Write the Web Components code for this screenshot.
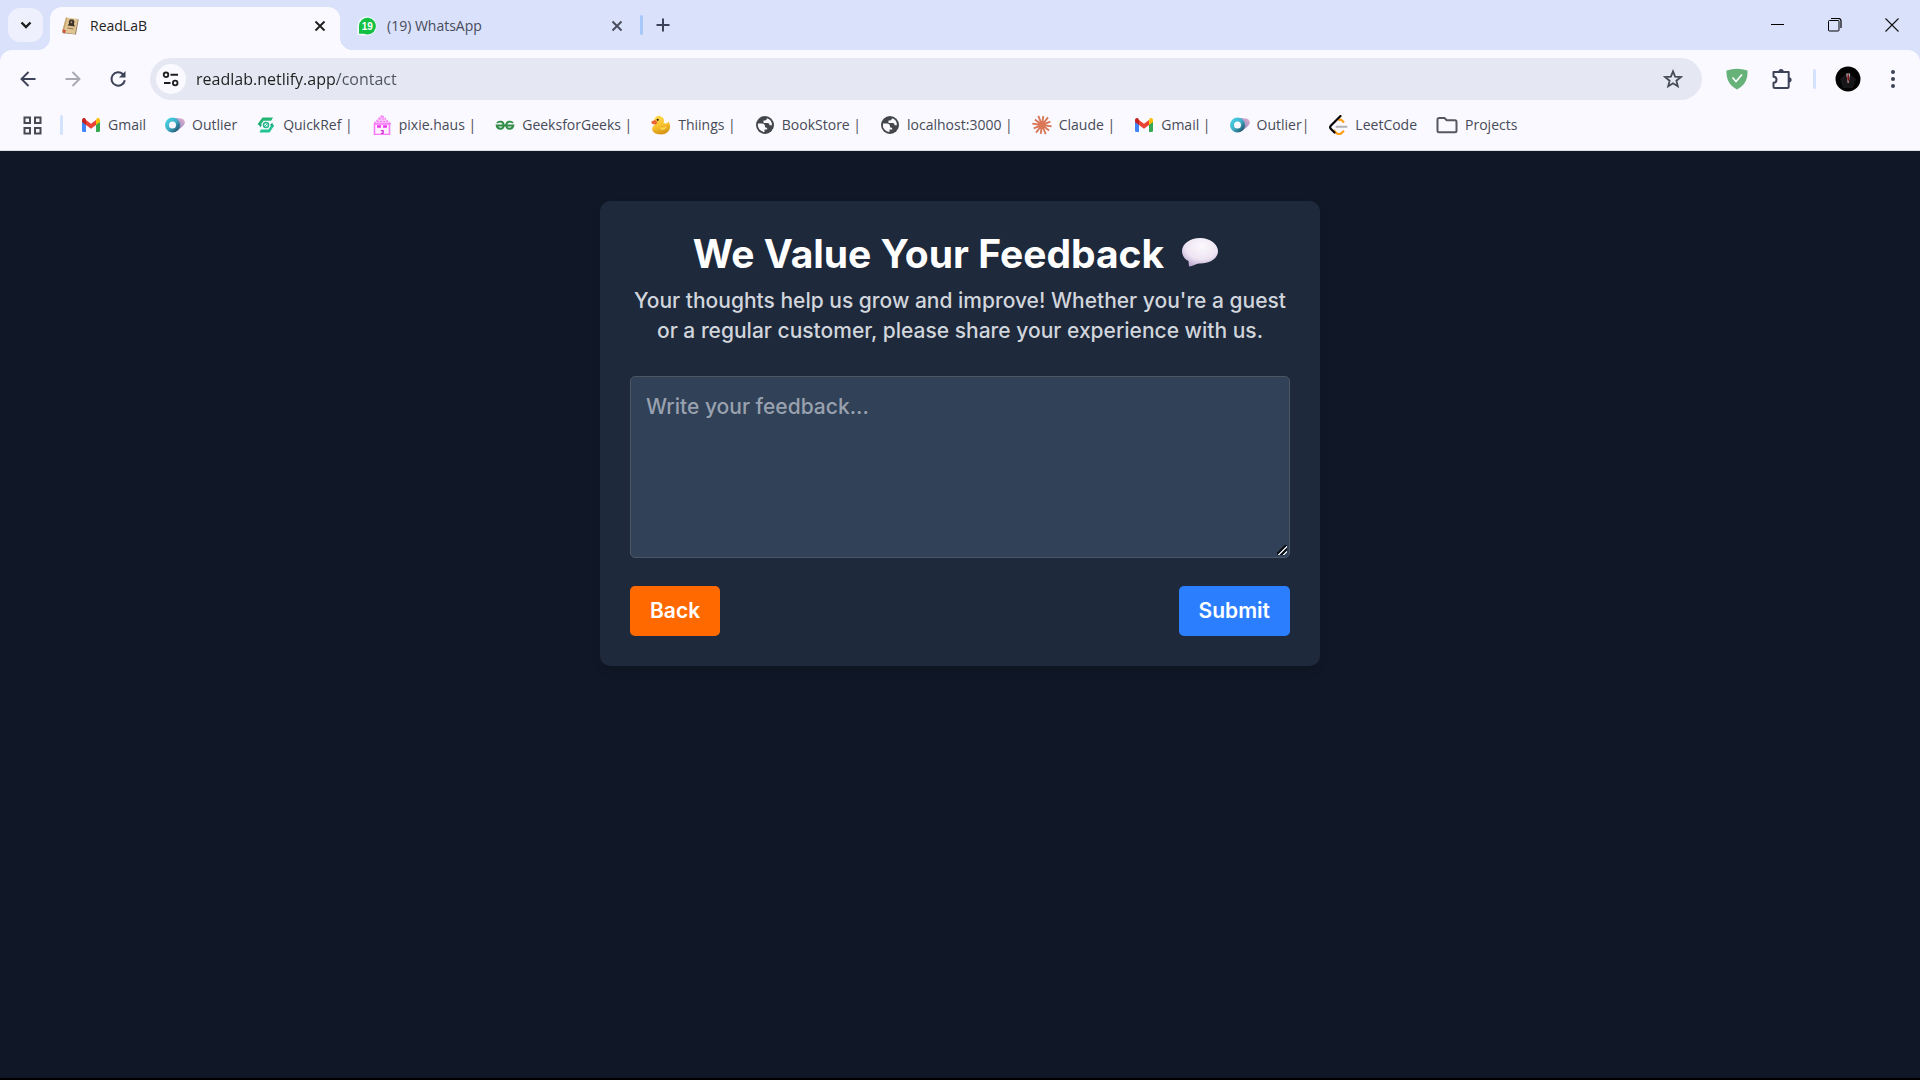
<!DOCTYPE html>
<html lang="en">
<head>
<meta charset="utf-8">
<title>ReadLaB</title>
<style>
  html, body { margin: 0; height: 100%; }
  body { font-family: "Open Sans", "Noto Sans", sans-serif; background: #101726; }
</style>
</head>
<body>
<browser-window>
  <tab-strip slot="tabs">
    <browser-tab icon="book" active>ReadLaB</browser-tab>
    <browser-tab icon="whatsapp">(19) WhatsApp</browser-tab>
  </tab-strip>
  <nav-bar slot="nav" url="readlab.netlify.app/contact"></nav-bar>
  <bookmark-bar slot="bookmarks">
    <bookmark-item icon="gmail" href="#gmail">Gmail</bookmark-item>
    <bookmark-item icon="outlier" href="#outlier">Outlier</bookmark-item>
    <bookmark-item icon="quickref" href="#quickref">QuickRef |</bookmark-item>
    <bookmark-item icon="house" href="#pixie">pixie.haus |</bookmark-item>
    <bookmark-item icon="geeks" href="#geeks">GeeksforGeeks |</bookmark-item>
    <bookmark-item icon="duck" href="#thiings">Thiings |</bookmark-item>
    <bookmark-item icon="globe" href="#bookstore">BookStore |</bookmark-item>
    <bookmark-item icon="globe" href="#localhost">localhost:3000 |</bookmark-item>
    <bookmark-item icon="claude" href="#claude">Claude |</bookmark-item>
    <bookmark-item icon="gmail" href="#gmail2">Gmail |</bookmark-item>
    <bookmark-item icon="outlier" href="#outlier2">Outlier|</bookmark-item>
    <bookmark-item icon="leetcode" href="#leetcode">LeetCode</bookmark-item>
    <bookmark-item icon="folder" href="#projects">Projects</bookmark-item>
  </bookmark-bar>
  <feedback-card>
    <span slot="title">We Value Your Feedback</span>
    Your thoughts help us grow and improve! Whether you're a guest or a regular customer, please share your experience with us.
  </feedback-card>
</browser-window>

<script>
const svg = (w, h, body) => `<svg width="${w}" height="${h}" viewBox="0 0 ${w} ${h}" fill="none" aria-hidden="true">${body}</svg>`;

const rays = Array.from({ length: 12 }, (_, i) => {
  const a = (i * 30 + 8) * Math.PI / 180, r = i % 2 ? 9 : 9.8;
  return `M10 10L${(10 + r * Math.cos(a)).toFixed(1)} ${(10 + r * Math.sin(a)).toFixed(1)}`;
}).join('');

const ICONS = {
  chevron: svg(12, 12, '<path d="M1.5 3.5L6 8l4.500-4.500" stroke="#1f1f1f" stroke-width="2.400"/>'),
  close: svg(12, 12, '<path d="M1.500 1.500l9 9M10.500 1.500l-9 9" stroke="currentColor" stroke-width="1.900"/>'),
  plus: svg(14, 14, '<path d="M7 .5v13M.5 7h13" stroke="#3c4257" stroke-width="2"/>'),
  min: svg(14, 14, '<path d="M0 6.500h13" stroke="#000"/>'),
  max: svg(14, 14, '<rect x=".5" y="2.500" width="10.500" height="10.500" rx="1" stroke="#000"/><path d="M3 .5h7.500a2.500 2.500 0 0 1 2.500 2.500V10" stroke="#000" stroke-width="1.200"/>'),
  winclose: svg(14, 14, '<path d="M.5 .5l13 13M13.500 .5l-13 13" stroke="#111" stroke-width="1.100"/>'),
  back: svg(16, 16, '<path d="M15.500 8H2M8.500 1L1.500 8l7 7" stroke="#3c4257" stroke-width="1.900"/>'),
  forward: svg(16, 16, '<path d="M.5 8H14M7.500 1l7 7-7 7" stroke="#a9a9b2" stroke-width="1.900"/>'),
  reload: svg(18, 18, '<path d="M15.800 10.200A6.700 6.700 0 1 1 14 4.300l1.500 1.500" stroke="#3c4257" stroke-width="2"/><path d="M16.500 1v6.500H10z" fill="#3c4257"/>'),
  tune: svg(18, 16, '<circle cx="4" cy="3.800" r="2.300" stroke="#1f1f1f" stroke-width="1.800"/><path d="M8.500 3.800H16M2 12h6.500" stroke="#1f1f1f" stroke-width="2"/><circle cx="13.200" cy="12" r="2.300" stroke="#1f1f1f" stroke-width="1.800"/>'),
  star: svg(20, 20, '<path d="M10 2.400l2.100 5.300 5.700.4-4.400 3.600 1.400 5.600L10 14.200l-4.800 3.100 1.400-5.600-4.400-3.600 5.700-.4z" stroke="#474b57" stroke-width="1.800"/>'),
  shield: svg(22, 22, '<path d="M.5 2.500Q11-1 21.500 2.500C22 12 18 18 11 21.500 4 18 0 12 .5 2.500z" fill="#67b279"/><path d="M6.500 9.500l3.500 4 6-7" stroke="#fff" stroke-width="1.700"/>'),
  puzzle: svg(22, 22, '<path d="M2.500 4h15.200v14.500a1.500 1.500 0 0 1-1.500 1.500H4a1.500 1.500 0 0 1-1.500-1.500v-3.700a3 3 0 0 0 0-6z" stroke="#3c4257" stroke-width="2" stroke-linejoin="round"/><path d="M7.500 3.500a2.600 2.600 0 0 1 5.200 0zM18 9.200a2.600 2.600 0 0 1 0 5.200z" fill="#3c4257"/>'),
  avatar: svg(26, 26, '<circle cx="13" cy="13" r="12.500" fill="#030303"/><path d="M11 8l-6 5 3 9h10l3-9-6-5z" fill="#171719"/><path d="M11.200 7.500h4l-1.500 9.500h-1z" fill="#b9b4b4"/><path d="M12.700 8h1l.6 4.500-1.100 4-1-4z" fill="#7f1218"/>'),
  dots: svg(6, 20, '<circle cx="3" cy="3" r="2" fill="#3c4257"/><circle cx="3" cy="10" r="2" fill="#3c4257"/><circle cx="3" cy="17" r="2" fill="#3c4257"/>'),
  apps: svg(19, 19, '<path d="M1.500 1.500h5.500v5.500H1.500zM12 1.500h5.500v5.500H12zM1.500 12h5.500v5.500H1.500zM12 12h5.500v5.500H12z" stroke="#474a50" stroke-width="2"/>'),
  book: svg(20, 20, '<path d="M6 1.500l12 1.500-2.800 15L2 16z" fill="#e0c592"/><path d="M6 1.500L2 16l1.500.3L7.300 1.700z" fill="#c3a26c"/><path d="M2 16l13 2L18 3l.6.600-2.700 14.900L3 17z" fill="#8b6d45"/><path d="M8.700 5.500l1.300-2h3.200l1.300 2-.6 2.500 1 2.500-7.400-1L9 7.800z" fill="#3b332a"/><path d="M10.700 5.300l1.600.2-.3 1.700-1.500-.2z" fill="#b89c70"/><path d="M7.500 12l6 .9" stroke="#8a7350"/><path d="M2.500 13.500l3.500.7-2 4z" fill="#cf4a38"/>'),
  whatsapp: svg(20, 20, '<path d="M.5 19V10A9.500 9.500 0 1 1 10 19.500z" fill="#f7fbff"/><path d="M2 17.800V10a8.400 8.400 0 1 1 5 7.800z" fill="#12c143"/><text x="10.300" y="13.700" text-anchor="middle" font-family="Liberation Sans, sans-serif" font-weight="700" font-size="10" fill="#fff">19</text>'),
  gmail: svg(20, 20, '<path d="M1 6v9.500A1.500 1.500 0 0 0 2.500 17H5V8z" fill="#4285f4"/><path d="M15 8v9h2.500a1.500 1.500 0 0 0 1.500-1.500V6z" fill="#34a853"/><path d="M15 5.500V10l4-3V5.200c0-2-2-2.700-3.300-1.700z" fill="#fbbc04"/><path d="M5 10V5l5 3.800L15 5v5l-5 3.800z" fill="#ea4335"/><path d="M1 5.200V7l4 3V5l-.7-1.500C3 2.500 1 3.200 1 5.200z" fill="#c5221f"/>'),
  outlier: svg(20, 20, '<defs><linearGradient id="a" x1="0" y1="0" x2="1" y2="1"><stop stop-color="#48cfe4"/><stop offset=".5" stop-color="#3fb0c8"/><stop offset="1" stop-color="#22566f"/></linearGradient><linearGradient id="b" x1="0" y1="1" x2="1" y2="0"><stop stop-color="#4b6fae"/><stop offset=".6" stop-color="#b49bc9"/><stop offset="1" stop-color="#e7b3c9"/></linearGradient></defs><path d="M8 4c3-2 6 0 7-.5 3-.7 6 2.500 4.500 5.500-1 2.500-5 4.500-7.500 7z" fill="url(#b)"/><circle cx="7.500" cy="10" r="5.500" stroke="url(#a)" stroke-width="4" fill="#faf9ff"/>'),
  quickref: svg(20, 20, '<path d="M6.500 2.500h10.500l-1.800 3.200H7.500L4 11 1.500 9.300z" fill="#22b573"/><path d="M13.500 17.500H3.500l1.300-3h7.700L16 9l2.300 1.500z" fill="#22c493"/><path d="M3.500 8.500L6 10l-2 2.500zM16.500 11.500L14 10l2.500-2.500z" fill="#16a07b"/><circle cx="10" cy="10" r="2.500" stroke="#22b98a" stroke-width="1.500"/><path d="M8 12l4-4" stroke="#22b98a"/>'),
  house: svg(20, 20, '<path d="M10 .5L2 8.500h16z" fill="#fbc6fb" stroke="#f38df5" stroke-width="1.500" stroke-dasharray="2 1"/><path d="M10 1v2M7 4h6M5 6.500h10" stroke="#f27df4" stroke-dasharray="2 1"/><rect x="2.500" y="9" width="15" height="10.500" fill="#fff0ff" stroke="#fa7bf9" stroke-width="1.600"/><path d="M5 11.500h4M11 11.500h4" stroke="#e93be9" stroke-width="2.500"/><path d="M8.800 15.500h2.400v3H9M9.500 17h2" stroke="#d236d6" stroke-width="1.200"/>'),
  geeks: svg(20, 20, '<path d="M2 8C4 5.700 8.700 6.200 8.700 10.200 8.700 14.800 2.500 14.800 1.700 10.500H18.300C17.500 14.800 11.300 14.800 11.300 10.200 11.300 6.200 16 5.700 18 8" stroke="#2f8d46" stroke-width="1.900"/>'),
  duck: svg(20, 20, '<defs><linearGradient id="d" x1="0" y1="0" x2=".3" y2="1"><stop stop-color="#ffdc50"/><stop offset=".6" stop-color="#f9c22e"/><stop offset="1" stop-color="#d89818"/></linearGradient></defs><path d="M3 6a5 5 0 1 1 9.500 2c2.500 1 4 .5 5-1.500 3 3.500 2.300 13-7.500 13C3 19.500.5 16 1.300 13 2 10.500 3.500 10 4.500 9.200z" fill="url(#d)"/><path d="M4 5L.3 6.500 1 9l4 .5 1.500-2.300z" fill="#ef6130"/><circle cx="6.700" cy="4.800" r="1.100" fill="#2a1a0c"/><path d="M9 12c3 .5 6-.5 7.500-2-.3 4-4 6.500-7 4.500" fill="#ffd64c" stroke="#dd9d1e" stroke-width=".6"/>'),
  globe: svg(20, 20, '<circle cx="10" cy="10" r="9" fill="#44474a"/><path d="M3 8.500h4c1.600 0 3 1 3 2.700v1.100c1.500 0 2.300.7 2.300 2.200H9.500V17A7 7 0 0 1 3 8.500zM12 3.300c-.3 1.700-1 2.200-3.500 2.300v2.300h4c1.500 0 2 .9 2 2.300h2.400A7 7 0 0 0 12 3.300z" fill="#faf9ff"/>'),
  claude: svg(20, 20, `<path d="${rays}" stroke="#d97757" stroke-width="1.900"/><circle cx="10" cy="10" r="3" fill="#d97757"/>`),
  leetcode: svg(20, 20, '<path d="M16 7.500l-2-2c-1-1-2.500-1-3.600 0M5.500 15l2.700 2.900c1.800 1.600 4 1.500 5.500 0L16 15.800" stroke="#ffa116" stroke-width="2.200"/><path d="M12.500 1L3 10.500c-1 1-1 2.500 0 3.500l3.500 3.500" stroke="#070706" stroke-width="2.200" stroke-linecap="round"/><path d="M8.500 11.700h10" stroke="#b3b3b3" stroke-width="2" stroke-linecap="round"/>'),
  folder: svg(22, 20, '<path d="M1.500 4.500a1.500 1.500 0 0 1 1.500-1.500h5.500l2.200 2.300H19a1.500 1.500 0 0 1 1.500 1.500v9a1.500 1.500 0 0 1-1.500 1.500H3a1.500 1.500 0 0 1-1.500-1.500z" stroke="#55585e" stroke-width="2"/>'),
  bubble: svg(38, 33, '<defs><radialGradient id="s" cx=".55" cy=".3" r=".75"><stop stop-color="#fbf9fd"/><stop offset=".6" stop-color="#eee5f3"/><stop offset="1" stop-color="#b7a5d0"/></radialGradient></defs><path d="M19 1C30 1 37 8 37 14 37 22 28 27 18 26.500 15 27 12 29 8 29.500L7.500 24C3 22 1 18 1 14 1 7 9 1 19 1z" fill="url(#s)"/>')
};

/* Registers an element whose shadow root is cloned from a template. */
function define(name, css, markup, setup) {
  const tpl = document.createElement('template');
  tpl.innerHTML = `<style>*{box-sizing:border-box}button{font:inherit;border:0;padding:0;margin:0;background:none;cursor:pointer}${css}</style>${markup}`;
  customElements.define(name, class extends HTMLElement {
    constructor() {
      super();
      this.attachShadow({ mode: 'open' }).append(tpl.content.cloneNode(true));
    }
    connectedCallback() { if (setup) setup(this, this.shadowRoot); }
  });
}

define('ui-icon', ':host{display:inline-flex;flex:none}svg{display:block}', '', (el, root) => {
  if (!root.querySelector('svg')) root.innerHTML += ICONS[el.getAttribute('name')] || '';
});

define('browser-window', `
  :host{display:flex;flex-direction:column;min-height:100vh;box-sizing:border-box;border-bottom:2px solid #000}
  header{background:#dae1fa}
  .bars{background:#faf9ff;border-radius:12px 12px 0 0;border-bottom:1px solid #dfe0e6}
  main{flex:1;padding:50px 24px;background:#101726}`,
  `<header><slot name="tabs"></slot><div class="bars"><slot name="nav"></slot><slot name="bookmarks"></slot></div></header>
   <main><slot></slot></main>`);

define('tab-strip', `
  :host{display:flex;height:50px;padding-left:8px}
  .search{align-self:center;width:35px;height:34px;border-radius:12px;background:#eef1fd;display:grid;place-items:center;margin-right:7px}
  .tabs{display:flex;gap:7px;align-items:flex-end}
  .sep{align-self:center;width:3px;height:20px;border-radius:2px;background:#a8c7fa;margin:0 3px}
  .new{width:34px;display:grid;place-items:center}
  .win{margin-left:auto;display:flex}
  .win button{width:57px;display:grid;place-items:center}`,
  `<button class="search" aria-label="Search tabs"><ui-icon name="chevron"></ui-icon></button>
   <div class="tabs"><slot></slot></div><span class="sep"></span>
   <button class="new" aria-label="New tab"><ui-icon name="plus"></ui-icon></button>
   <div class="win"><button aria-label="Minimize"><ui-icon name="min"></ui-icon></button><button aria-label="Restore"><ui-icon name="max"></ui-icon></button><button aria-label="Close"><ui-icon name="winclose"></ui-icon></button></div>`);

define('browser-tab', `
  :host{display:flex;position:relative;align-items:center;gap:10px;width:290px;height:43px;padding:0 14px 6px 10px;box-sizing:border-box;font-size:14px;line-height:20px;color:#474b5a}
  :host([active]){background:#faf9ff;border-radius:12px 12px 0 0;color:#1f1f1f}
  :host([active])::before,:host([active])::after{content:"";position:absolute;bottom:0;width:12px;height:12px}
  :host([active])::before{right:100%;background:radial-gradient(circle at 0 0,transparent 12px,#faf9ff 12px)}
  :host([active])::after{left:100%;background:radial-gradient(circle at 100% 0,transparent 12px,#faf9ff 12px)}
  .name{flex:1}
  .x{width:12px;height:20px;display:grid;place-items:center;color:inherit}`,
  `<ui-icon></ui-icon><span class="name"><slot></slot></span><button class="x" aria-label="Close tab"><ui-icon name="close"></ui-icon></button>`,
  (el, root) => {
    const icon = document.createElement('ui-icon');
    icon.setAttribute('name', el.getAttribute('icon'));
    root.querySelector('ui-icon').replaceWith(icon);
  });

define('nav-bar', `
  :host{display:flex;align-items:center;gap:10px;padding:8px 10px 0}
  button{width:35px;height:35px;display:grid;place-items:center}
  .omni{flex:1;display:flex;align-items:center;height:42px;margin:0 7px 0 5px;padding:0 12px 0 6px;border-radius:21px;background:#e5e8f3}
  .omni .site{width:30px;height:30px;border-radius:50%;background:#faf9ff}
  input{flex:1;min-width:0;border:0;outline:0;padding:0 10px;font:16px/24px "Open Sans","Noto Sans",sans-serif;color:#1f1f1f;
    background:linear-gradient(90deg,#1f1f1f 151px,#4d515c 151px);-webkit-background-clip:text;background-clip:text;-webkit-text-fill-color:transparent}
  .sep{width:3px;height:20px;border-radius:2px;background:#d3e3fd;margin:0 4px}`,
  `<button aria-label="Back"><ui-icon name="back"></ui-icon></button>
   <button aria-label="Forward"><ui-icon name="forward"></ui-icon></button>
   <button aria-label="Reload"><ui-icon name="reload"></ui-icon></button>
   <div class="omni"><button class="site" aria-label="Site information"><ui-icon name="tune"></ui-icon></button>
   <input type="text" aria-label="Address" spellcheck="false"><button aria-label="Bookmark this page"><ui-icon name="star"></ui-icon></button></div>
   <button aria-label="Ad blocker"><ui-icon name="shield"></ui-icon></button>
   <button aria-label="Extensions"><ui-icon name="puzzle"></ui-icon></button><span class="sep"></span>
   <button aria-label="Profile"><ui-icon name="avatar"></ui-icon></button>
   <button aria-label="Menu"><ui-icon name="dots"></ui-icon></button>`,
  (el, root) => { root.querySelector('input').value = el.getAttribute('url'); });

define('bookmark-bar', `
  :host{display:flex;align-items:center;height:50px;padding-left:23px}
  button{display:grid}
  .sep{width:3px;height:20px;border-radius:2px;background:#d3e3fd;margin:0 18px}
  nav{display:flex;gap:19px}`,
  `<button aria-label="Apps"><ui-icon name="apps"></ui-icon></button><span class="sep"></span><nav><slot></slot></nav>`);

define('bookmark-item', `
  :host{display:block}
  a{display:flex;align-items:center;gap:7px;color:#474b57;text-decoration:none;font-size:14px;line-height:20px;white-space:nowrap}`,
  `<a><slot></slot></a>`,
  (el, root) => {
    const a = root.querySelector('a'), icon = document.createElement('ui-icon');
    a.href = el.getAttribute('href');
    icon.setAttribute('name', el.getAttribute('icon'));
    a.prepend(icon);
  });

define('feedback-card', `
  :host{display:block;max-width:720px;margin:0 auto;padding:30px;box-sizing:border-box;border-radius:10px;background:#1e293b;
    box-shadow:0 5px 8px rgba(0,0,0,.12);font-family:Inter,"Open Sans",sans-serif;font-weight:500;font-size:21px;line-height:30px}
  h1{display:flex;justify-content:center;align-items:center;gap:17px;margin:0 0 10px;padding-right:8px;font-size:39px;line-height:45px;font-weight:700;color:#fff}
  p{margin:0 0 30px;text-align:center;color:#d1d5dc}
  textarea{display:block;width:100%;padding:15px;border:1px solid #4a5565;border-radius:5px;background:#314158;font:inherit;color:#fff;resize:vertical;outline:0}
  textarea::placeholder{color:#99a1af;opacity:1}
  textarea::-webkit-resizer{background:linear-gradient(135deg,transparent 38%,#10151d 38% 50%,#d8dbe0 50% 62%,#10151d 62% 76%,#d8dbe0 76% 88%,transparent 88%) right 2px bottom 2px/10px 10px no-repeat}
  .actions{display:flex;justify-content:space-between;margin-top:28px}
  .actions button{height:50px;padding:0 20px;border-radius:5px;color:#fff;font-weight:600}
  .back{background:#ff6900}
  .submit{background:#2b7fff}`,
  `<h1><slot name="title"></slot><ui-icon name="bubble"></ui-icon></h1>
   <p><slot></slot></p>
   <form><textarea rows="5" placeholder="Write your feedback..." aria-label="Write your feedback"></textarea>
   <div class="actions"><button type="button" class="back">Back</button><button type="button" class="submit">Submit</button></div></form>`);
</script>
</body>
</html>
